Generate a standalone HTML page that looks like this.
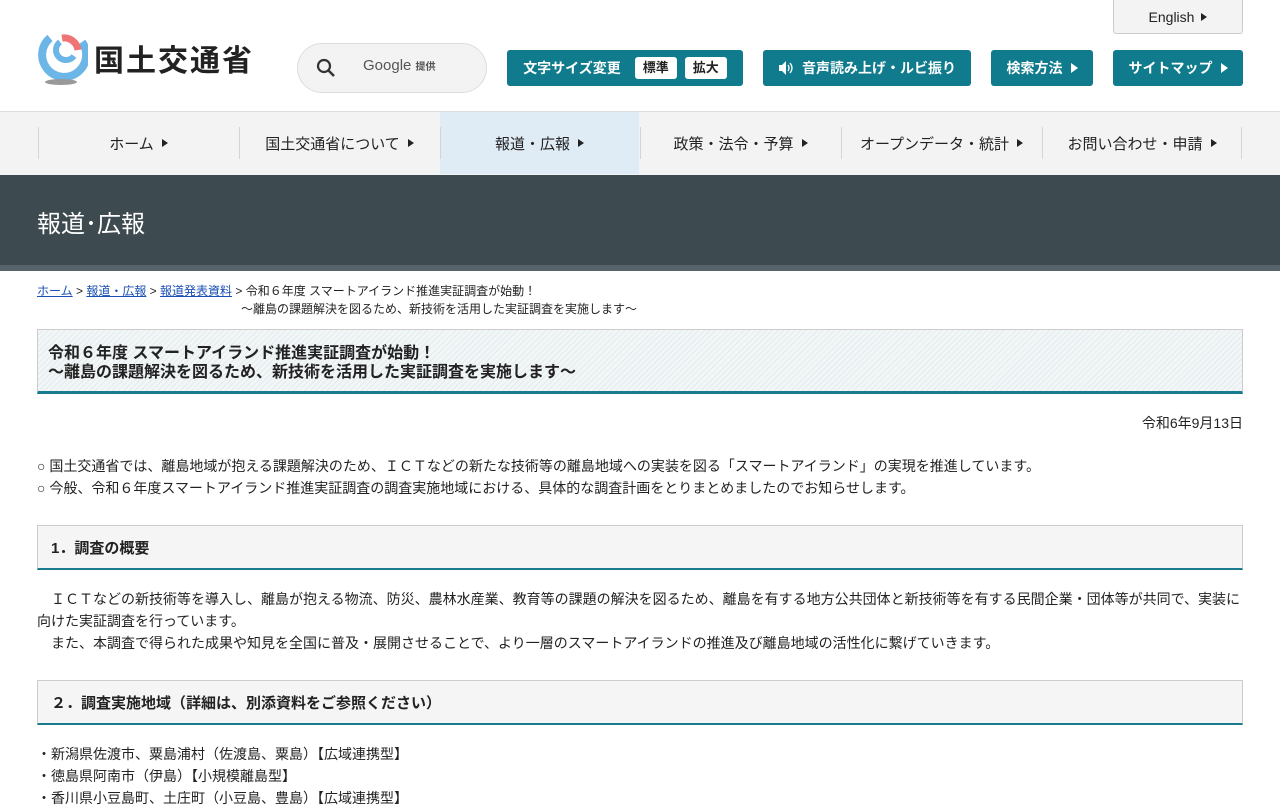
<!DOCTYPE html>
<html lang="ja"><head><meta charset="utf-8"><style>
*{margin:0;padding:0;box-sizing:border-box}
body{width:1280px;height:800px;overflow:hidden;background:#fff;font-family:"Liberation Sans","Noto Sans CJK JP",sans-serif;color:#222}
.abs{position:absolute}
.btn{position:absolute;top:50px;height:36px;background:#0f7b8c;color:#fff;border-radius:3px;font-size:14px;font-weight:bold;display:flex;align-items:center;justify-content:center;gap:8px}
.tri{display:inline-block;width:0;height:0;border-left:7px solid currentColor;border-top:5px solid transparent;border-bottom:5px solid transparent}
.nav{position:absolute;top:111px;left:0;width:1280px;height:64px;background:#f3f3f3;border-top:1px solid #ddd}
.ni{position:absolute;top:0;height:62px;width:201px;display:flex;align-items:center;justify-content:center;font-size:15px;gap:8px;color:#222}
.ni:before{content:"";position:absolute;left:0;top:15px;height:32px;border-left:1px solid #d4d4d4}
.ni .tri{border-left-width:6px;border-top-width:4px;border-bottom-width:4px}
.txt{font-size:14px;line-height:22px;position:absolute;left:37px}
.sec{position:absolute;left:37px;width:1206px;height:45px;background:#f5f5f5;border:1px solid #ccc;border-bottom:2px solid #1a7b8e;font-size:15px;font-weight:bold;padding-left:13px;display:flex;align-items:center}
a{color:#1a4fb4}
</style></head><body>
<div class="abs" style="left:1113px;top:-1px;width:130px;height:35px;background:#f3f3f3;border:1px solid #ccc;border-radius:0 0 3px 3px;font-size:14px;display:flex;align-items:center;justify-content:center;gap:7px">English <span class="tri" style="border-left-width:6px;border-top-width:4px;border-bottom-width:4px"></span></div>
<svg class="abs" style="left:36px;top:32px" width="52" height="56" viewBox="0 0 52 56">
<path d="M14 6 A22 22 0 1 0 46 10" fill="none" stroke="#6bb6e6" stroke-width="8"/>
<path d="M24 10 A10 10 0 1 0 38 24" fill="none" stroke="#6bb6e6" stroke-width="6"/>
<path d="M26 6 A14 14 0 0 1 42 18" fill="none" stroke="#ef7474" stroke-width="7"/>
<ellipse cx="25" cy="50" rx="16" ry="3" fill="#999"/>
</svg>
<div class="abs" style="left:94px;top:36px;font-size:30px;font-weight:bold;color:#222;letter-spacing:2px;font-family:'Noto Sans CJK JP',sans-serif">国土交通省</div>
<div class="abs" style="left:297px;top:43px;width:190px;height:50px;background:#f3f3f3;border:1px solid #ddd;border-radius:25px">
<svg class="abs" style="left:18px;top:14px" width="20" height="20" viewBox="0 0 20 20"><circle cx="8" cy="8" r="6" fill="none" stroke="#333" stroke-width="2.2"/><path d="M12.5 12.5 L18 18" stroke="#333" stroke-width="2.5"/></svg>
<span class="abs" style="left:65px;top:13px;font-size:15px;color:#555">Google <span style="font-size:10px;font-weight:bold">提供</span></span></div>
<div class="btn" style="left:507px;width:236px">文字サイズ変更 <span style="background:#fff;color:#222;border-radius:3px;padding:0 8px;margin-left:6px;font-size:13px;line-height:22px">標準</span><span style="background:#fff;color:#222;border-radius:3px;padding:0 8px;font-size:13px;line-height:22px">拡大</span></div>
<div class="btn" style="left:763px;width:208px"><svg width="16" height="16" viewBox="0 0 16 16"><path d="M1 5h3l4-4v14l-4-4H1z" fill="#fff"/><path d="M10 5q2 3 0 6M12 3q4 5 0 10" stroke="#fff" fill="none" stroke-width="1.3"/></svg>音声読み上げ・ルビ振り</div>
<div class="btn" style="left:991px;width:102px">検索方法 <span class="tri"></span></div>
<div class="btn" style="left:1113px;width:130px">サイトマップ <span class="tri"></span></div>
<div class="nav">
<div class="ni" style="left:38px">ホーム<span class="tri"></span></div>
<div class="ni" style="left:239px">国土交通省について<span class="tri"></span></div>
<div class="ni" style="left:440px;background:#dfebf5;width:199px">報道・広報<span class="tri"></span></div>
<div class="ni" style="left:640px">政策・法令・予算<span class="tri"></span></div>
<div class="ni" style="left:841px">オープンデータ・統計<span class="tri"></span></div>
<div class="ni" style="left:1042px;width:200px">お問い合わせ・申請<span class="tri"></span></div>
<div class="abs" style="left:1241px;top:15px;height:32px;border-left:1px solid #d4d4d4"></div>
</div>
<div class="abs" style="left:0;top:175px;width:1280px;height:90px;background:#3d4a50"></div>
<div class="abs" style="left:0;top:265px;width:1280px;height:6px;background:#56636a"></div>
<div class="abs" style="left:37px;top:204px;font-size:24px;color:#fff">報道･広報</div>
<div class="abs" style="left:37px;top:282px;font-size:12px;line-height:18px"><a href="#">ホーム</a> &gt; <a href="#">報道・広報</a> &gt; <a href="#">報道発表資料</a> &gt; 令和６年度 スマートアイランド推進実証調査が始動！<br><span style="padding-left:204px">～離島の課題解決を図るため、新技術を活用した実証調査を実施します～</span></div>
<div class="abs" style="left:37px;top:329px;width:1206px;height:65px;border:1px solid #ccc;border-bottom:3px solid #1a7b8e;background:repeating-linear-gradient(135deg,#f2f6f7 0 3px,#e2ecee 3px 4px);font-size:16px;font-weight:bold;line-height:19px;padding:14px 0 0 10px">令和６年度 スマートアイランド推進実証調査が始動！<br>～離島の課題解決を図るため、新技術を活用した実証調査を実施します～</div>
<div class="abs" style="right:37px;top:412px;font-size:14px;line-height:22px">令和6年9月13日</div>
<div class="txt" style="top:455px">○ 国土交通省では、離島地域が抱える課題解決のため、ＩＣＴなどの新たな技術等の離島地域への実装を図る「スマートアイランド」の実現を推進しています。<br>○ 今般、令和６年度スマートアイランド推進実証調査の調査実施地域における、具体的な調査計画をとりまとめましたのでお知らせします。</div>
<div class="sec" style="top:525px">1．調査の概要</div>
<div class="txt" style="top:588px;width:1210px">　ＩＣＴなどの新技術等を導入し、離島が抱える物流、防災、農林水産業、教育等の課題の解決を図るため、離島を有する地方公共団体と新技術等を有する民間企業・団体等が共同で、実装に<br>向けた実証調査を行っています。<br>　また、本調査で得られた成果や知見を全国に普及・展開させることで、より一層のスマートアイランドの推進及び離島地域の活性化に繋げていきます。</div>
<div class="sec" style="top:680px">２．調査実施地域（詳細は、別添資料をご参照ください）</div>
<div class="txt" style="top:743px">・新潟県佐渡市、粟島浦村（佐渡島、粟島）【広域連携型】<br>・徳島県阿南市（伊島）【小規模離島型】<br>・香川県小豆島町、土庄町（小豆島、豊島）【広域連携型】</div>
</body></html>
